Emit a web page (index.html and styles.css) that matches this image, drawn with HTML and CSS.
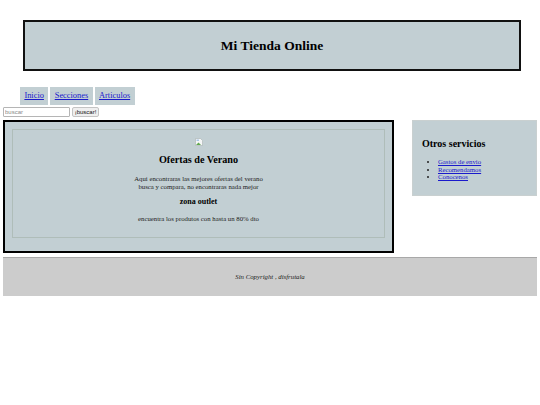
FILE: index.html
```html
<!DOCTYPE html>
<html lang="es">
<head>
    <meta charset="UTF-8">
    <title>Mi Tienda Online</title>
    <link rel="stylesheet" href="styles.css">
</head>
<body>
    <header class="cabecera">
        <h1>Mi Tienda Online</h1>
    </header>

    <nav class="menu">
        <a href="#">Inicio</a>
        <a href="#">Secciones</a>
        <a href="#">Articulos</a>
    </nav>

    <form class="busqueda">
        <input type="text" placeholder="buscar">
        <button type="button">¡buscar!</button>
    </form>

    <div class="columnas">
        <main class="principal">
            <div class="ofertas">
                <svg class="img-rota" viewBox="0 0 8 8" width="8" height="8">
                    <path d="M0.5 0.5H5.5L7.5 2.5V7.5H0.5Z" fill="#f4f6f6" stroke="#a9b2b2" stroke-width="0.6"/>
                    <path d="M1 7L3.5 4.5L6 7Z" fill="#5fa84f"/>
                    <path d="M1.5 3H4V1.5H1.5Z" fill="#a8c4e8"/>
                </svg>
                <h2>Ofertas de Verano</h2>
                <p>Aqui encontraras las mejores ofertas del verano<br>busca y compara, no encontraras nada mejor</p>
                <h3>zona outlet</h3>
                <p>encuentra los produtos con hasta un 80% dto</p>
            </div>
        </main>

        <aside class="servicios">
            <h2>Otros servicios</h2>
            <ul>
                <li><a href="#">Gastos de envio</a></li>
                <li><a href="#">Recomendamos</a></li>
                <li><a href="#">Conocenos</a></li>
            </ul>
        </aside>
    </div>

    <footer class="pie">
        <p>Sin Copyright , disfrutala</p>
    </footer>
</body>
</html>
```

FILE: styles.css
```css
body {
    margin: 0;
    padding: 20px 3px 0;
    background-color: white;
    font-family: "Liberation Serif", "Times New Roman", serif;
    font-size: 6.75px;
    line-height: 7.6px;
    color: #222;
}

.cabecera {
    box-sizing: border-box;
    margin: 0 16px 0 20px;
    height: 51px;
    display: flex;
    align-items: center;
    justify-content: center;
    background-color: #c2cfd3;
    border: 2px solid #111;
}

.cabecera h1 {
    margin: 0;
    font-size: 13.5px;
    line-height: 16px;
    color: #000;
}

.menu {
    display: flex;
    gap: 2px;
    margin: 16px 0 2px 17px;
}

.menu a {
    padding: 0 4.4px;
    height: 18px;
    line-height: 18px;
    font-size: 8.4px;
    background-color: #c2cfd3;
    color: #1a1acc;
}

.busqueda {
    display: flex;
    gap: 2px;
    margin: 0;
    height: 10px;
}

.busqueda input {
    box-sizing: border-box;
    width: 67px;
    height: 10px;
    margin: 0;
    padding: 0 1px;
    border: 1px solid #b5b5b5;
    border-radius: 1px;
    font-family: "Liberation Sans", Arial, sans-serif;
    font-size: 6px;
}

.busqueda input::placeholder {
    color: #8a8a8a;
}

.busqueda button {
    box-sizing: border-box;
    width: 27px;
    height: 10px;
    padding: 0;
    border: 1px solid #c4c4c4;
    border-radius: 2px;
    background-color: #efefef;
    font-family: "Liberation Sans", Arial, sans-serif;
    font-size: 6px;
    line-height: 8px;
    color: #111;
}

.columnas {
    display: flex;
    align-items: flex-start;
    justify-content: space-between;
    margin-top: 3px;
}

.principal {
    box-sizing: border-box;
    width: 391px;
    height: 133px;
    padding: 7px;
    background-color: #c2cfd3;
    border: 2px solid #000;
}

.ofertas {
    box-sizing: border-box;
    height: 109px;
    padding-top: 8px;
    border: 1px solid #afbdb9;
    text-align: center;
}

.img-rota {
    display: block;
    margin: 0 auto;
}

.ofertas h2 {
    margin: 7px 0 9px;
    font-size: 10.2px;
    line-height: 13px;
    color: #000;
}

.ofertas p {
    margin: 0;
}

.ofertas h3 {
    margin: 7px 0 8px;
    font-size: 8px;
    line-height: 10px;
    color: #000;
}

.servicios {
    box-sizing: border-box;
    width: 125px;
    height: 76px;
    padding: 17px 9px 0;
    background-color: #c2cfd3;
    border: 1px solid #c9d0d0;
}

.servicios h2 {
    margin: 0 0 8px;
    font-size: 10px;
    line-height: 12px;
    color: #000;
}

.servicios ul {
    margin: 0;
    padding-left: 16px;
}

.servicios a {
    color: #1a1acc;
}

.pie {
    box-sizing: border-box;
    height: 39px;
    margin-top: 4px;
    display: flex;
    align-items: center;
    justify-content: center;
    background-color: #cccccc;
    border-top: 1px solid #a8a8a8;
}

.pie p {
    margin: 0;
    font-size: 6.8px;
    font-style: italic;
}
```
